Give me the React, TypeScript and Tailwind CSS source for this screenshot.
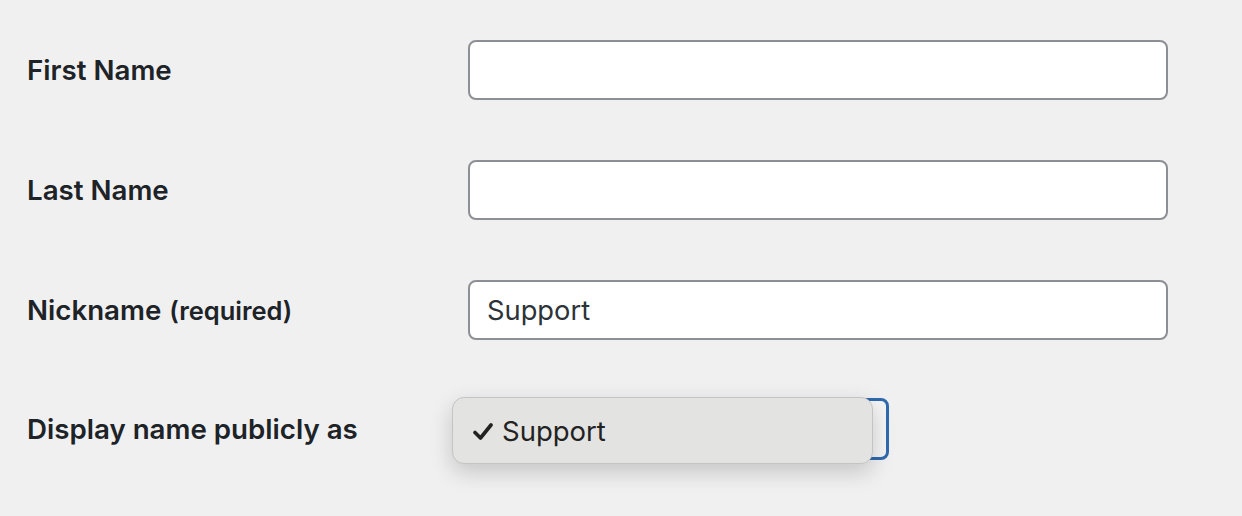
export default function App() {
  const fields = [
    { label: "First Name", value: "" },
    { label: "Last Name", value: "" },
    { label: "Nickname", note: "(required)", value: "Support" },
  ];

  return (
    <div className="min-h-[516px] w-[1242px] bg-[#f0f0f1] pl-[27px] pt-[40px] font-['Inter',sans-serif] text-[#1d2327]">
      <div className="flex flex-col gap-[60px]">
        {fields.map((f) => (
          <div key={f.label} className="flex items-center">
            <label className="w-[441px] pt-[1px] text-[27.7px] font-semibold">
              {f.label}
              {f.note && <span className="ml-[8px] text-[25.5px]">{f.note}</span>}
            </label>
            <input
              readOnly
              value={f.value}
              className="h-[60px] w-[700px] rounded-[8px] border-2 border-[#8c8f94] bg-white px-[17px] text-[27.3px] text-[#2c3338] outline-none"
            />
          </div>
        ))}

        <div className="-mt-[2px] flex items-center">
          <label className="w-[441px] pt-[1px] text-[27.7px] font-semibold">Display name publicly as</label>
          <div className="relative h-[62px] w-[421px] rounded-[8px] border-[3px] border-[#2f6aad] bg-[#f4f4f4]">
            {/* open dropdown menu */}
            <div className="absolute -left-[19px] -top-[4px] flex h-[67px] w-[421px] items-center rounded-[12px] border border-[#c4c4c4] bg-[#e3e3e1] pl-[20px] pt-[2px] text-[27.5px] text-[#222] shadow-[0_8px_22px_rgba(0,0,0,0.18)]">
              <svg width="20" height="18" viewBox="0 0 20 18" className="mr-[9px] mt-[1px]">
                <polyline
                  points="2,9.5 7.5,15 18,2"
                  fill="none"
                  stroke="#222"
                  strokeWidth="3.6"
                  strokeLinecap="round"
                  strokeLinejoin="round"
                />
              </svg>
              Support
            </div>
          </div>
        </div>
      </div>
    </div>
  );
}
